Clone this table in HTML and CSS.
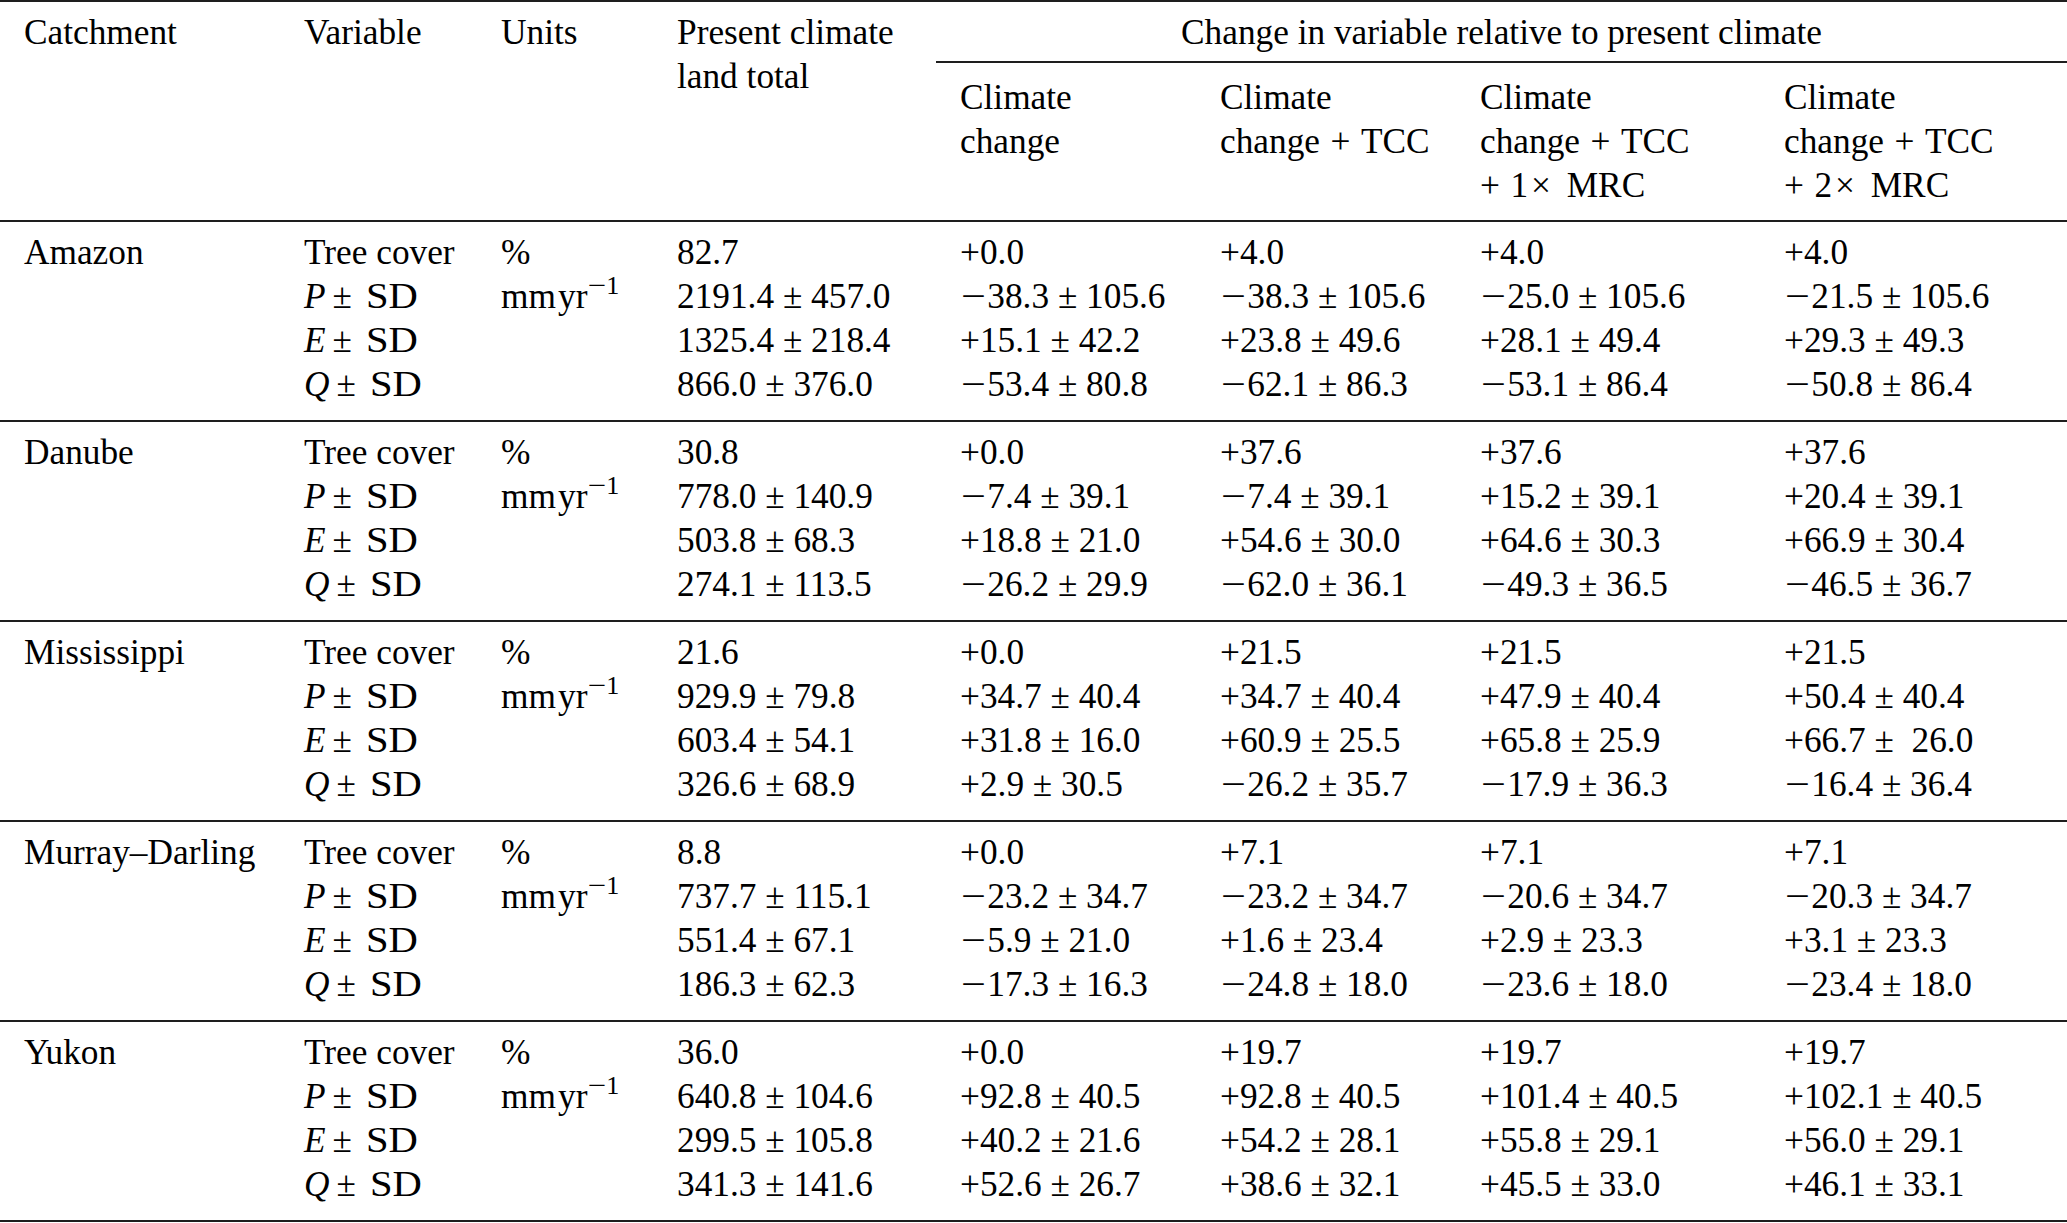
FILE: index.html
```html
<!DOCTYPE html>
<html lang="en">
<head>
<meta charset="utf-8">
<title>Catchment water balance changes</title>
<link rel="stylesheet" href="styles.css">
</head>
<body>
<table class="tbl">
  <colgroup>
    <col class="c1"><col class="c2"><col class="c3"><col class="c4">
    <col class="c5"><col class="c6"><col class="c7"><col class="c8">
  </colgroup>
  <thead>
    <tr>
      <th class="h1" rowspan="2"><div class="ln">Catchment</div></th>
      <th class="h1" rowspan="2"><div class="ln">Variable</div></th>
      <th class="h1" rowspan="2"><div class="ln">Units</div></th>
      <th class="h1" rowspan="2"><div class="ln">Present climate</div><div class="ln">land total</div></th>
      <th class="span" colspan="4"><div class="ln">Change in variable relative to present climate</div></th>
    </tr>
    <tr>
      <th class="h2"><div class="ln">Climate</div><div class="ln">change</div></th>
      <th class="h2"><div class="ln">Climate</div><div class="ln">change<span class="op">+</span>TCC</div></th>
      <th class="h2"><div class="ln">Climate</div><div class="ln">change<span class="op">+</span>TCC</div><div class="ln"><span class="op lead">+</span>1<span class="times">×</span>MRC</div></th>
      <th class="h2"><div class="ln">Climate</div><div class="ln">change<span class="op">+</span>TCC</div><div class="ln"><span class="op lead">+</span>2<span class="times">×</span>MRC</div></th>
    </tr>
  </thead>
  <tbody>
    <tr>
      <td><div class="ln">Amazon</div></td>
      <td><div class="ln">Tree cover</div><div class="ln"><i>P</i><span class="pmv">±</span> <span class="sd">SD</span></div><div class="ln"><i>E</i><span class="pmv">±</span> <span class="sd">SD</span></div><div class="ln"><i>Q</i><span class="pmv">±</span> <span class="sd">SD</span></div></td>
      <td><div class="ln">%</div><div class="ln">mm<span class="thin"></span>yr<sup><span class="mn">−</span>1</sup></div></td>
      <td><div class="ln">82.7</div><div class="ln">2191.4<span class="pm">±</span>457.0</div><div class="ln">1325.4<span class="pm">±</span>218.4</div><div class="ln">866.0<span class="pm">±</span>376.0</div></td>
      <td><div class="ln">+0.0</div><div class="ln"><span class="mn">−</span>38.3<span class="pm">±</span>105.6</div><div class="ln">+15.1<span class="pm">±</span>42.2</div><div class="ln"><span class="mn">−</span>53.4<span class="pm">±</span>80.8</div></td>
      <td><div class="ln">+4.0</div><div class="ln"><span class="mn">−</span>38.3<span class="pm">±</span>105.6</div><div class="ln">+23.8<span class="pm">±</span>49.6</div><div class="ln"><span class="mn">−</span>62.1<span class="pm">±</span>86.3</div></td>
      <td><div class="ln">+4.0</div><div class="ln"><span class="mn">−</span>25.0<span class="pm">±</span>105.6</div><div class="ln">+28.1<span class="pm">±</span>49.4</div><div class="ln"><span class="mn">−</span>53.1<span class="pm">±</span>86.4</div></td>
      <td><div class="ln">+4.0</div><div class="ln"><span class="mn">−</span>21.5<span class="pm">±</span>105.6</div><div class="ln">+29.3<span class="pm">±</span>49.3</div><div class="ln"><span class="mn">−</span>50.8<span class="pm">±</span>86.4</div></td>
    </tr>
    <tr>
      <td><div class="ln">Danube</div></td>
      <td><div class="ln">Tree cover</div><div class="ln"><i>P</i><span class="pmv">±</span> <span class="sd">SD</span></div><div class="ln"><i>E</i><span class="pmv">±</span> <span class="sd">SD</span></div><div class="ln"><i>Q</i><span class="pmv">±</span> <span class="sd">SD</span></div></td>
      <td><div class="ln">%</div><div class="ln">mm<span class="thin"></span>yr<sup><span class="mn">−</span>1</sup></div></td>
      <td><div class="ln">30.8</div><div class="ln">778.0<span class="pm">±</span>140.9</div><div class="ln">503.8<span class="pm">±</span>68.3</div><div class="ln">274.1<span class="pm">±</span>113.5</div></td>
      <td><div class="ln">+0.0</div><div class="ln"><span class="mn">−</span>7.4<span class="pm">±</span>39.1</div><div class="ln">+18.8<span class="pm">±</span>21.0</div><div class="ln"><span class="mn">−</span>26.2<span class="pm">±</span>29.9</div></td>
      <td><div class="ln">+37.6</div><div class="ln"><span class="mn">−</span>7.4<span class="pm">±</span>39.1</div><div class="ln">+54.6<span class="pm">±</span>30.0</div><div class="ln"><span class="mn">−</span>62.0<span class="pm">±</span>36.1</div></td>
      <td><div class="ln">+37.6</div><div class="ln">+15.2<span class="pm">±</span>39.1</div><div class="ln">+64.6<span class="pm">±</span>30.3</div><div class="ln"><span class="mn">−</span>49.3<span class="pm">±</span>36.5</div></td>
      <td><div class="ln">+37.6</div><div class="ln">+20.4<span class="pm">±</span>39.1</div><div class="ln">+66.9<span class="pm">±</span>30.4</div><div class="ln"><span class="mn">−</span>46.5<span class="pm">±</span>36.7</div></td>
    </tr>
    <tr>
      <td><div class="ln">Mississippi</div></td>
      <td><div class="ln">Tree cover</div><div class="ln"><i>P</i><span class="pmv">±</span> <span class="sd">SD</span></div><div class="ln"><i>E</i><span class="pmv">±</span> <span class="sd">SD</span></div><div class="ln"><i>Q</i><span class="pmv">±</span> <span class="sd">SD</span></div></td>
      <td><div class="ln">%</div><div class="ln">mm<span class="thin"></span>yr<sup><span class="mn">−</span>1</sup></div></td>
      <td><div class="ln">21.6</div><div class="ln">929.9<span class="pm">±</span>79.8</div><div class="ln">603.4<span class="pm">±</span>54.1</div><div class="ln">326.6<span class="pm">±</span>68.9</div></td>
      <td><div class="ln">+0.0</div><div class="ln">+34.7<span class="pm">±</span>40.4</div><div class="ln">+31.8<span class="pm">±</span>16.0</div><div class="ln">+2.9<span class="pm">±</span>30.5</div></td>
      <td><div class="ln">+21.5</div><div class="ln">+34.7<span class="pm">±</span>40.4</div><div class="ln">+60.9<span class="pm">±</span>25.5</div><div class="ln"><span class="mn">−</span>26.2<span class="pm">±</span>35.7</div></td>
      <td><div class="ln">+21.5</div><div class="ln">+47.9<span class="pm">±</span>40.4</div><div class="ln">+65.8<span class="pm">±</span>25.9</div><div class="ln"><span class="mn">−</span>17.9<span class="pm">±</span>36.3</div></td>
      <td><div class="ln">+21.5</div><div class="ln">+50.4<span class="pm">±</span>40.4</div><div class="ln">+66.7<span class="pm">±</span> 26.0</div><div class="ln"><span class="mn">−</span>16.4<span class="pm">±</span>36.4</div></td>
    </tr>
    <tr>
      <td><div class="ln">Murray–Darling</div></td>
      <td><div class="ln">Tree cover</div><div class="ln"><i>P</i><span class="pmv">±</span> <span class="sd">SD</span></div><div class="ln"><i>E</i><span class="pmv">±</span> <span class="sd">SD</span></div><div class="ln"><i>Q</i><span class="pmv">±</span> <span class="sd">SD</span></div></td>
      <td><div class="ln">%</div><div class="ln">mm<span class="thin"></span>yr<sup><span class="mn">−</span>1</sup></div></td>
      <td><div class="ln">8.8</div><div class="ln">737.7<span class="pm">±</span>115.1</div><div class="ln">551.4<span class="pm">±</span>67.1</div><div class="ln">186.3<span class="pm">±</span>62.3</div></td>
      <td><div class="ln">+0.0</div><div class="ln"><span class="mn">−</span>23.2<span class="pm">±</span>34.7</div><div class="ln"><span class="mn">−</span>5.9<span class="pm">±</span>21.0</div><div class="ln"><span class="mn">−</span>17.3<span class="pm">±</span>16.3</div></td>
      <td><div class="ln">+7.1</div><div class="ln"><span class="mn">−</span>23.2<span class="pm">±</span>34.7</div><div class="ln">+1.6<span class="pm">±</span>23.4</div><div class="ln"><span class="mn">−</span>24.8<span class="pm">±</span>18.0</div></td>
      <td><div class="ln">+7.1</div><div class="ln"><span class="mn">−</span>20.6<span class="pm">±</span>34.7</div><div class="ln">+2.9<span class="pm">±</span>23.3</div><div class="ln"><span class="mn">−</span>23.6<span class="pm">±</span>18.0</div></td>
      <td><div class="ln">+7.1</div><div class="ln"><span class="mn">−</span>20.3<span class="pm">±</span>34.7</div><div class="ln">+3.1<span class="pm">±</span>23.3</div><div class="ln"><span class="mn">−</span>23.4<span class="pm">±</span>18.0</div></td>
    </tr>
    <tr>
      <td><div class="ln">Yukon</div></td>
      <td><div class="ln">Tree cover</div><div class="ln"><i>P</i><span class="pmv">±</span> <span class="sd">SD</span></div><div class="ln"><i>E</i><span class="pmv">±</span> <span class="sd">SD</span></div><div class="ln"><i>Q</i><span class="pmv">±</span> <span class="sd">SD</span></div></td>
      <td><div class="ln">%</div><div class="ln">mm<span class="thin"></span>yr<sup><span class="mn">−</span>1</sup></div></td>
      <td><div class="ln">36.0</div><div class="ln">640.8<span class="pm">±</span>104.6</div><div class="ln">299.5<span class="pm">±</span>105.8</div><div class="ln">341.3<span class="pm">±</span>141.6</div></td>
      <td><div class="ln">+0.0</div><div class="ln">+92.8<span class="pm">±</span>40.5</div><div class="ln">+40.2<span class="pm">±</span>21.6</div><div class="ln">+52.6<span class="pm">±</span>26.7</div></td>
      <td><div class="ln">+19.7</div><div class="ln">+92.8<span class="pm">±</span>40.5</div><div class="ln">+54.2<span class="pm">±</span>28.1</div><div class="ln">+38.6<span class="pm">±</span>32.1</div></td>
      <td><div class="ln">+19.7</div><div class="ln">+101.4<span class="pm">±</span>40.5</div><div class="ln">+55.8<span class="pm">±</span>29.1</div><div class="ln">+45.5<span class="pm">±</span>33.0</div></td>
      <td><div class="ln">+19.7</div><div class="ln">+102.1<span class="pm">±</span>40.5</div><div class="ln">+56.0<span class="pm">±</span>29.1</div><div class="ln">+46.1<span class="pm">±</span>33.1</div></td>
    </tr>
  </tbody>
</table>
</body>
</html>
```
FILE: styles.css
```css
html, body {
  margin: 0;
  padding: 0;
  background: #ffffff;
}

body {
  font-family: "Liberation Serif", "Times New Roman", serif;
  font-size: 35.3px;
  color: #000000;
}

.tbl {
  width: 2067px;
  table-layout: fixed;
  border-collapse: separate;
  border-spacing: 0;
  border-top: 2px solid #1e1e1e;
}

.c1 { width: 280px; }
.c2 { width: 197px; }
.c3 { width: 176px; }
.c4 { width: 283px; }
.c5 { width: 260px; }
.c6 { width: 260px; }
.c7 { width: 304px; }
.c8 { width: 307px; }

th, td {
  padding: 0 0 0 24px;
  text-align: left;
  vertical-align: top;
  font-weight: normal;
  white-space: nowrap;
}

.ln {
  height: 44px;
  line-height: 44px;
}

th.h1 {
  padding-top: 9px;
  border-bottom: 2px solid #1e1e1e;
}

th.span {
  text-align: center;
  padding: 9px 0 6px 0;
  border-bottom: 2px solid #1e1e1e;
}

th.h2 {
  padding-top: 13px;
  padding-bottom: 12px;
  border-bottom: 2px solid #1e1e1e;
}

td {
  padding-top: 9px;
  padding-bottom: 13px;
  border-bottom: 2px solid #1e1e1e;
}

/* binary plus in header labels */
.op {
  margin: 0 0.3em;
}

.op.lead {
  margin-left: 0;
}

.times {
  margin: 0 0.45em 0 0.08em;
}

/* plus-minus between value and SD */
.pm {
  margin: 0 0.25em;
}

/* plus-minus in variable labels */
.pmv {
  margin: 0 0.15em 0 0.2em;
}

.sd {
  display: inline-block;
  transform: scaleX(1.15);
  transform-origin: left center;
}

/* math minus, wider than text minus */
.mn {
  display: inline-block;
  margin: 0 0.17em 0 0.04em;
  transform: scaleX(1.25);
  transform-origin: left center;
}

.thin {
  display: inline-block;
  width: 0.06em;
}

sup {
  font-size: 0.74em;
  line-height: 0;
  vertical-align: 14px;
  margin-left: 0.04em;
}

sup .mn {
  margin: 0 0.12em 0 0;
}

i {
  font-style: italic;
}
```
